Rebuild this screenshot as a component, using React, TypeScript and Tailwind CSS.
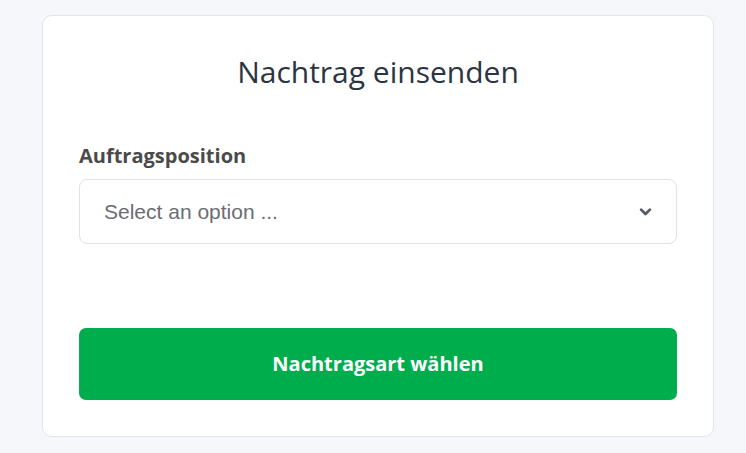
import React from 'react';

const ChevronDown = () => (
  <svg width="15" height="15" viewBox="0 0 24 24" fill="none" stroke="#555b66" strokeWidth="4.5" strokeLinecap="round" strokeLinejoin="round">
    <path d="M5 9 L12 16 L19 9" />
  </svg>
);

export default function App() {
  return (
    <div className="w-[746px] h-[453px] bg-[#f6f7fb] pt-[15px] pl-[42px] font-['Open_Sans',sans-serif]">
      <div className="w-[672px] h-[422px] bg-white border border-[#e1e4ea] rounded-[10px] px-[36px] pt-[36px] flex flex-col">
        <h1 className="text-center text-[30px] leading-[40px] text-[#2b3442]">Nachtrag einsenden</h1>

        <label className="mt-[51px] text-[20px] leading-[26px] font-bold text-[#4a4a4a]">Auftragsposition</label>
        <div className="mt-[10px] h-[65px] border border-[#dfe2e8] rounded-[8px] flex items-center justify-between pl-[24px] pr-[23px]">
          <span className="font-['Liberation_Sans',Arial,sans-serif] text-[21px] text-[#6a6d72]">Select an option ...</span>
          <ChevronDown />
        </div>

        <button className="mt-[84px] h-[72px] rounded-[7px] bg-[#00ad4d] text-white text-[20px] font-bold">
          Nachtragsart wählen
        </button>
      </div>
    </div>
  );
}
